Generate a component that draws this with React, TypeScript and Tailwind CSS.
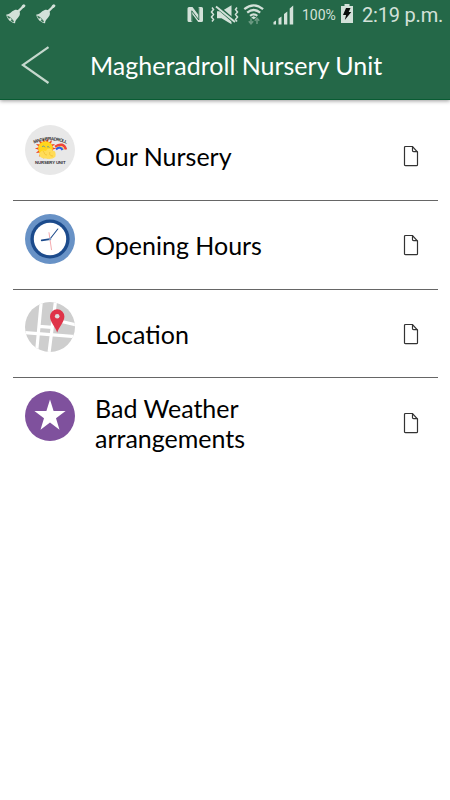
import React from "react";

const sunRays = Array.from({ length: 14 }, (_, i) => {
  const a = (i / 14) * Math.PI * 2;
  const p = (r: number, d: number) =>
    `${(20.5 + Math.cos(a + d) * r).toFixed(2)},${(23.5 + Math.sin(a + d) * r).toFixed(2)}`;
  return `${p(6.3, -0.25)} ${p(10.6, 0)} ${p(6.3, 0.25)}`;
});

function Bell() {
  return (
    <svg width="22" height="21" viewBox="0 0 22 21" fill="#d3e1d9">
      <g transform="translate(4.700 14.900) rotate(45)">
        <path d="M-6.200 0C-4.500-1.500-4.500-4-4.300-6.500-4-9.800-2.200-11.500 0-11.500S4-9.800 4.300-6.500C4.500-4 4.500-1.500 6.200 0 4 2.600-4 2.600-6.200 0Z" />
        <rect x="-1.100" y="-19" width="2.200" height="9" rx="1" />
        <rect x="-1.500" y="-20" width="3" height="3.800" rx="1.400" />
        <ellipse cx="0" cy=".1" rx="4.500" ry="1.100" fill="#3d7a5b" />
        <circle cx="0" cy=".7" r="1.300" />
      </g>
    </svg>
  );
}

function StatusIcons() {
  return (
    <svg width="110" height="24" viewBox="186 3 110 24" fill="#d3e1d9">
      <path d="M189 7h3.500l6 8V7h3q1.500 0 1.500 1.500v12q0 1.500-1.500 1.500h-3.300l-6-8v8H189q-1.500 0-1.500-1.500v-12Q187.500 7 189 7Z" />
      <path d="M191.800 21.500V10.800l7 9.200V7.500" fill="none" stroke="#246848" strokeWidth=".9" />
      <path d="M217 11.300h4.500l10-6v19l-10-6H217Z" />
      <path d="m216 5.500 19 16.500" stroke="#246848" strokeWidth="4" />
      <path d="m216 6.500 19 15.500" stroke="#d3e1d9" strokeWidth="1.900" />
      <path d="m212 7.500 1.500 2-2 2.500 2 2.500-2 2.500 2 2.500-1.500 2M237 7.500l-1.500 2 2 2.500-2 2.500 2 2.500-2 2.500 1.500 2" fill="none" stroke="#d3e1d9" strokeWidth="1.500" />
      <path d="M244.300 9.200q9.400-7.800 18.800 0M247.200 12.700q6.500-5.400 13 0M250.100 15.900q3.600-3 7.200 0" fill="none" stroke="#d3e1d9" strokeWidth="2.200" />
      <path d="m251.200 17.500 2.500-1.200 2.500 1.200-2.500 1.800Z" />
      <path d="M251 18.500v5M248.800 21.300l2.200 2.500 2.200-2.500M257 24v-5.500M254.800 20.700l2.200-2.500 2.200 2.500" fill="none" stroke="#6b9a82" strokeWidth="1.500" />
      <path d="M273.500 24.500v-2.500l2.500-1.500v4ZM278.500 24.500v-6l3-2v8ZM284 24.500v-10.500l3.300-2.500v13ZM289.700 24.500V8.500l3.500-3v19Z" />
    </svg>
  );
}

function Battery() {
  return (
    <svg width="14" height="20" viewBox="0 0 14 20">
      <path d="M4.500 0h5v2H13v17H1V2h3.500Z" fill="#d3e1d9" />
      <path d="M6 4h4.500L8.700 8h2.600L4.800 16l1.300-5H3Z" fill="#080c0a" />
    </svg>
  );
}

function NurseryLogo() {
  return (
    <svg width="50" height="50" viewBox="0 0 50 50" fontFamily="'Liberation Sans', Arial, sans-serif" fontWeight="700">
      <circle cx="25" cy="25" r="25" fill="#e8e8e8" />
      {sunRays.map((points) => (
        <polygon key={points} points={points} fill="#f04a20" />
      ))}
      <circle cx="20.500" cy="23.500" r="7.300" fill="#ffd51c" />
      <path d="M14 29c2-4 5-4 7-3 2-4 6-2.500 6.500 0 3-1 3.500 3 3 5.500-3 3-7 2.500-10 2-3-.2-6-1-6.500-4.500Z" fill="#ffdc58" />
      <path d="M18 26c2 2 1 4 4 4m3-3c-1 2 0 4 3 4" fill="none" stroke="#efb82d" strokeWidth=".7" />
      <path d="M17 22c1-1.500 2.500-1 3 .3m2-.2c1-.9 2-.4 2.300.5" fill="none" stroke="#649a9c" strokeWidth="1" />
      <path d="M30 21.700Q38.500 16.500 41 24.500" fill="none" stroke="#f0443a" strokeWidth="2.500" />
      <path d="M30.500 23.100Q37 19 39 24.800" fill="none" stroke="#ffcf38" strokeWidth="1" />
      <path d="M31 24.300Q35.500 20.800 37.500 25" fill="none" stroke="#315de8" strokeWidth="2.200" />
      <path id="logo-arc" d="M9 18.600Q25 12 41.500 18.600" fill="none" />
      <text fontSize="4.600" fill="#333">
        <textPath href="#logo-arc" textLength="33.500" lengthAdjust="spacing">MAGHERADROLL</textPath>
      </text>
      <text x="10" y="38.700" fontSize="4.300" fill="#333" textLength="30.500" lengthAdjust="spacing">NURSERY UNIT</text>
    </svg>
  );
}

function Clock() {
  return (
    <svg width="50" height="50" viewBox="0 0 50 50" fill="none" strokeLinecap="round">
      <circle cx="25" cy="25" r="25" fill="#6892c6" />
      <circle cx="25" cy="25" r="19.600" fill="#1c4b8c" />
      <circle cx="25" cy="25" r="16.200" fill="#fff" />
      <path d="m24 18.700 2.500 17" stroke="#f3a0a5" strokeWidth=".9" />
      <path d="m16.700 26.300 8.300-1.200" stroke="#1c4b8c" strokeWidth="1.700" />
      <path d="m25 25 7.800-10" stroke="#1c4b8c" strokeWidth="1.100" />
      <circle cx="25" cy="25" r="1.300" fill="#7e9bc0" />
    </svg>
  );
}

function MapPinIcon() {
  return (
    <svg width="50" height="50" viewBox="0 0 50 50">
      <defs>
        <clipPath id="map-disc">
          <circle cx="25" cy="25" r="25" />
        </clipPath>
      </defs>
      <g clipPath="url(#map-disc)" fill="none" stroke="#fff" strokeWidth="3.200">
        <path d="M0 0h50v50H0Z" fill="#cecece" stroke="none" />
        <path d="M16.300-1 11.500 51M30.500-1 24 51M-1 30.500 51 34.700M14 24.300l13 1M29 17.800l22 5" />
      </g>
      <path d="M32.200 30.500C30.500 25.500 25 19.500 25 14.500a7.200 7.200 0 0 1 14.400 0c0 5-5.500 11-7.200 16Z" fill="#df3348" />
      <circle cx="32.200" cy="14.300" r="2.300" fill="#dedede" />
    </svg>
  );
}

function Star() {
  return (
    <svg width="50" height="50" viewBox="0 0 50 50">
      <circle cx="25" cy="25" r="25" fill="#7f519d" />
      <path d="m25 8.500 3.600 11.600h12L31 27.300l3.500 11.500L25 31.600l-9.500 7.200L19 27.300l-9.600-7.200h12Z" fill="#fff" />
    </svg>
  );
}

function Doc() {
  return (
    <svg width="16" height="22" viewBox="0 0 16 22" fill="none" stroke="#333" strokeWidth="1.200">
      <path d="M2.500 1.500h7l5 5.500v12.700q0 1-1 1h-11q-1 0-1-1V2.500q0-1 1-1Z" />
      <path d="M9.500 1.500v4q0 1.200 1.200 1.200h3.800" />
    </svg>
  );
}

const items = [
  { label: "Our Nursery", Icon: NurseryLogo },
  { label: "Opening Hours", Icon: Clock },
  { label: "Location", Icon: MapPinIcon },
  { label: "Bad Weather arrangements", Icon: Star },
];

export default function App() {
  return (
    <div className="min-h-[800px] w-[450px] bg-white font-[Lato,sans-serif]">
      <header className="h-[100px] border-b border-[#085b32] bg-[#246848] shadow-[0_1px_4px_rgba(0,0,0,0.4)]">
        <div className="flex h-[30px] items-start font-[Roboto,sans-serif] text-[#d3e1d9]">
          <div className="flex gap-2 pt-[4px] pl-[6px]">
            <Bell />
            <Bell />
          </div>
          <div className="ml-[128px] pt-[3px]">
            <StatusIcons />
          </div>
          <span className="ml-[6px] w-[35px] pt-[5px] text-[14px] leading-5">100%</span>
          <div className="ml-[3px] pt-[4px]">
            <Battery />
          </div>
          <span className="ml-[8px] pt-[2px] text-[20px] leading-[26px] tracking-[-0.200px] whitespace-nowrap">2:19 p.m.</span>
        </div>
        <div className="flex h-[70px] items-center">
          <svg className="ml-[21px]" width="29" height="40" viewBox="0 0 29 40" fill="none" stroke="#c5d8cd" strokeWidth="2.200">
            <path d="M27.500 2.200 1.800 20l25.700 18" />
          </svg>
          <h1 className="ml-[40px] text-[25px] leading-[30px] whitespace-nowrap text-white">Magheradroll Nursery Unit</h1>
        </div>
      </header>
      <main className="px-[12.500px] pt-[12.400px]">
        {items.map(({ label, Icon }) => (
          <div key={label} className="flex h-[88.700px] items-start border-b border-[#666] pl-[12.500px] last:border-b-0">
            <div className="pt-[12.500px]">
              <Icon />
            </div>
            <div className="ml-5 flex h-full w-[200px] items-center">
              <span className="text-[25px] leading-[30px] text-black">{label}</span>
            </div>
            <div className="ml-auto flex h-full items-center pr-[19px]">
              <Doc />
            </div>
          </div>
        ))}
      </main>
    </div>
  );
}
